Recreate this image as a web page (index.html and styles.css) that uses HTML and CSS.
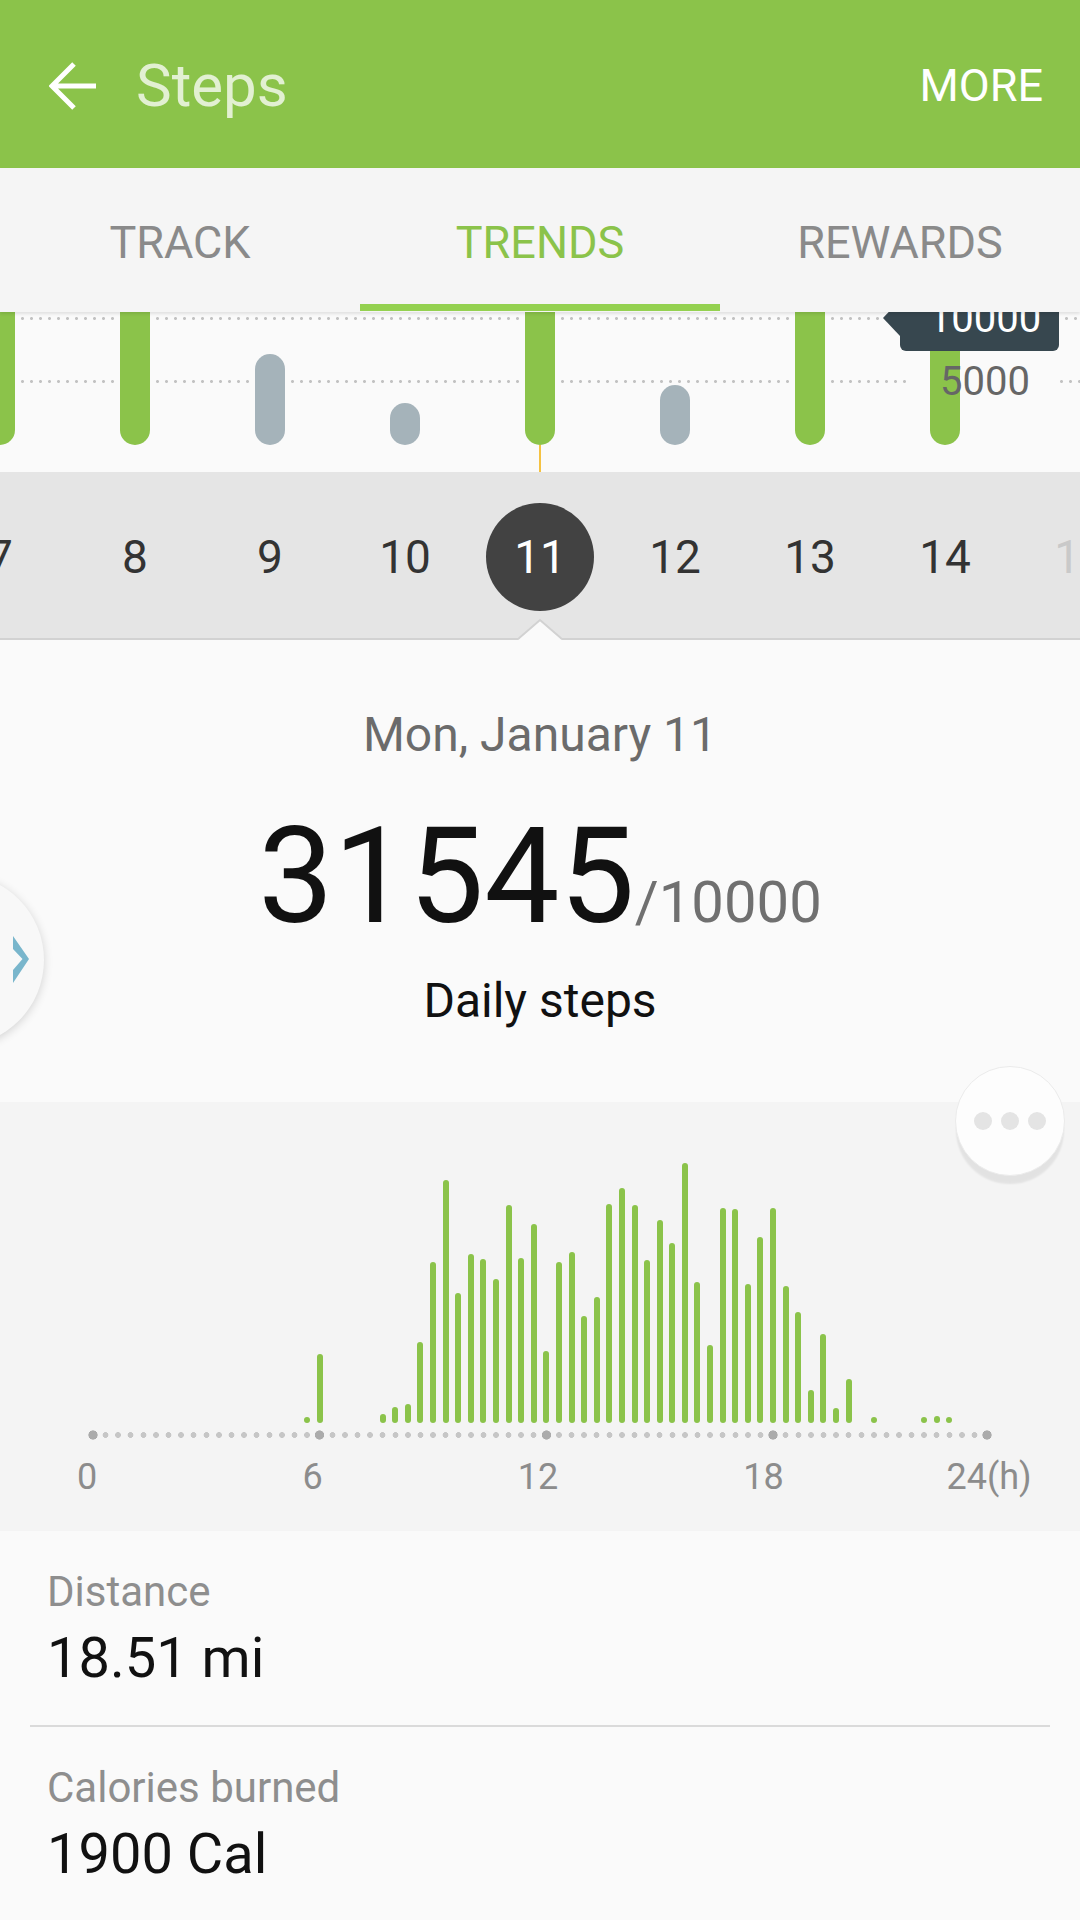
FILE: index.html
```html
<!DOCTYPE html>
<html>
<head>
    <meta charset="utf-8">
    <title>Steps</title>
    <link rel="stylesheet" href="styles.css">
</head>
<body>
    <header class="appbar">
        <svg class="back" width="48" height="48" viewBox="0 0 48 48">
            <path d="M47 24H4M25 2L3 24l22 22" fill="none" stroke="#fff" stroke-width="5"/>
        </svg>
        <h1 class="title">Steps</h1>
        <span class="more">MORE</span>
    </header>

    <nav class="tabs">
        <div class="tab">TRACK</div>
        <div class="tab active">TRENDS</div>
        <div class="tab">REWARDS</div>
    </nav>

    <section class="week">
        <div class="grid-line line-10k"></div>
        <div class="grid-line line-5k"></div>
        <div class="grid-line line-5k-end"></div>
        <div class="week-bars">
            <div class="day-col"><span class="wbar goal"></span><span class="tick"></span></div>
            <div class="day-col"><span class="wbar goal"></span><span class="tick"></span></div>
            <div class="day-col"><span class="wbar" style="height:91px"></span><span class="tick"></span></div>
            <div class="day-col"><span class="wbar" style="height:42px"></span><span class="tick"></span></div>
            <div class="day-col selected"><span class="wbar goal"></span><span class="tick"></span></div>
            <div class="day-col"><span class="wbar" style="height:60px"></span><span class="tick"></span></div>
            <div class="day-col"><span class="wbar goal"></span><span class="tick"></span></div>
            <div class="day-col"><span class="wbar goal"></span><span class="tick"></span></div>
            <div class="day-col"><span class="tick"></span></div>
        </div>
        <div class="goal-tip">10000</div>
        <div class="axis-label">5000</div>
    </section>

    <div class="day-strip">
        <div class="days">
            <div class="day">7</div>
            <div class="day">8</div>
            <div class="day">9</div>
            <div class="day">10</div>
            <div class="day selected"><span class="num">11</span></div>
            <div class="day">12</div>
            <div class="day">13</div>
            <div class="day">14</div>
            <div class="day faded">15</div>
        </div>
        <svg class="notch" width="44" height="22" viewBox="0 0 44 22">
            <polygon points="0,22 22,2 44,22" fill="#fafafa"/>
            <polyline points="0,21 22,2 44,21" fill="none" stroke="#d2d2d2" stroke-width="2"/>
        </svg>
    </div>

    <section class="summary">
        <p class="date">Mon, January 11</p>
        <p class="count"><span class="count-value">31545</span><span class="count-goal">/10000</span></p>
        <p class="count-label">Daily steps</p>
        <button class="side-next">
            <svg width="20" height="52" viewBox="0 0 20 52">
                <polygon points="1,2 17,25 1,49 1,36 10.5,25 1,15" fill="#79b6cc"/>
            </svg>
        </button>
    </section>

    <section class="hourly">
        <button class="more-btn"><i></i><i></i><i></i></button>
        <div class="hour-bars">
            <i></i><i></i><i></i><i></i><i></i><i></i>
            <i></i><i></i><i></i><i></i><i></i><i></i>
            <i></i><i></i><i></i><i></i><i></i>
            <i><b style="height:6px"></b></i>
            <i><b style="height:69px"></b></i>
            <i></i><i></i><i></i><i></i>
            <i><b style="height:9px"></b></i>
            <i><b style="height:16px"></b></i>
            <i><b style="height:19px"></b></i>
            <i><b style="height:81px"></b></i>
            <i><b style="height:161px"></b></i>
            <i><b style="height:243px"></b></i>
            <i><b style="height:130px"></b></i>
            <i><b style="height:169px"></b></i>
            <i><b style="height:164px"></b></i>
            <i><b style="height:144px"></b></i>
            <i><b style="height:218px"></b></i>
            <i><b style="height:165px"></b></i>
            <i><b style="height:199px"></b></i>
            <i><b style="height:72px"></b></i>
            <i><b style="height:161px"></b></i>
            <i><b style="height:171px"></b></i>
            <i><b style="height:107px"></b></i>
            <i><b style="height:126px"></b></i>
            <i><b style="height:219px"></b></i>
            <i><b style="height:235px"></b></i>
            <i><b style="height:218px"></b></i>
            <i><b style="height:163px"></b></i>
            <i><b style="height:203px"></b></i>
            <i><b style="height:180px"></b></i>
            <i><b style="height:260px"></b></i>
            <i><b style="height:141px"></b></i>
            <i><b style="height:78px"></b></i>
            <i><b style="height:215px"></b></i>
            <i><b style="height:214px"></b></i>
            <i><b style="height:139px"></b></i>
            <i><b style="height:186px"></b></i>
            <i><b style="height:215px"></b></i>
            <i><b style="height:137px"></b></i>
            <i><b style="height:111px"></b></i>
            <i><b style="height:33px"></b></i>
            <i><b style="height:89px"></b></i>
            <i><b style="height:15px"></b></i>
            <i><b style="height:44px"></b></i>
            <i></i>
            <i><b style="height:6px"></b></i>
            <i></i><i></i><i></i>
            <i><b style="height:6px"></b></i>
            <i><b style="height:7px"></b></i>
            <i><b style="height:6px"></b></i>
            <i></i><i></i><i></i>
        </div>
        <div class="hour-dots">
            <span class="major"></span><span></span><span></span><span></span><span></span><span></span>
            <span></span><span></span><span></span><span></span><span></span><span></span>
            <span></span><span></span><span></span><span></span><span></span><span></span>
            <span class="major"></span><span></span><span></span><span></span><span></span><span></span>
            <span></span><span></span><span></span><span></span><span></span><span></span>
            <span></span><span></span><span></span><span></span><span></span><span></span>
            <span class="major"></span><span></span><span></span><span></span><span></span><span></span>
            <span></span><span></span><span></span><span></span><span></span><span></span>
            <span></span><span></span><span></span><span></span><span></span><span></span>
            <span class="major"></span><span></span><span></span><span></span><span></span><span></span>
            <span></span><span></span><span></span><span></span><span></span><span></span>
            <span></span><span></span><span></span><span></span><span></span><span class="major"></span>
        </div>
        <div class="hour-labels">
            <span>0</span><span>6</span><span>12</span><span>18</span><span>24(h)</span>
        </div>
    </section>

    <section class="stats">
        <div class="stat">
            <p class="stat-name">Distance</p>
            <p class="stat-value">18.51 mi</p>
        </div>
        <div class="stat">
            <p class="stat-name">Calories burned</p>
            <p class="stat-value">1900 Cal</p>
        </div>
    </section>
</body>
</html>
```

FILE: styles.css
```css
body {
    margin: 0;
    width: 1080px;
    height: 1920px;
    overflow: hidden;
    background-color: #fafafa;
    font-family: Roboto, "Noto Sans", sans-serif;
}

/* top bar */
.appbar {
    height: 168px;
    box-sizing: border-box;
    padding: 4px 37px 0 49px;
    display: flex;
    align-items: center;
    background-color: #8bc34a;
}

.appbar .back {
    flex: none;
    margin-right: 39px;
}

.appbar .title {
    flex: 1;
    margin: 0;
    font-size: 60px;
    font-weight: 400;
    line-height: 68px;
    color: #e2f0d2;
}

.appbar .more {
    font-size: 45px;
    line-height: 52px;
    color: #fff;
}

/* tabs */
.tabs {
    position: relative;
    z-index: 3;
    display: flex;
    height: 144px;
    background-color: #f5f5f5;
    box-shadow: 0 2px 3px rgba(0, 0, 0, 0.1);
}

.tab {
    flex: 1;
    height: 143px;
    box-sizing: border-box;
    padding-top: 49px;
    border-bottom: 7px solid transparent;
    text-align: center;
    font-size: 45px;
    line-height: 52px;
    color: #8a8a8a;
}

.tab.active {
    color: #8bc34a;
    border-bottom-color: #94d150;
}

/* weekly chart */
.week {
    position: relative;
    height: 160px;
    overflow: hidden;
    background-color: #fafafa;
}

.grid-line {
    position: absolute;
    left: 0;
    right: 0;
    height: 3px;
    background-image: radial-gradient(circle, #c2c2c2 1.2px, transparent 1.7px);
    background-size: 9px 3px;
}

.line-10k {
    top: 5px;
}

.line-5k {
    top: 68px;
    right: 168px;
}

.line-5k-end {
    top: 68px;
    left: 1057px;
}

.week-bars {
    position: relative;
    display: flex;
    height: 100%;
    margin-left: -67.5px;
}

.day-col {
    flex: none;
    width: 135px;
    display: flex;
    flex-direction: column;
    align-items: center;
    justify-content: flex-end;
}

.wbar {
    flex: none;
    width: 30px;
    border-radius: 15px;
    background-color: #a5b3ba;
}

.wbar.goal {
    height: 150px;
    border-radius: 0 0 15px 15px;
    background-color: #8bc34a;
}

.tick {
    flex: none;
    width: 2px;
    height: 27px;
}

.day-col.selected .tick {
    background-color: #f5c242;
}

.goal-tip {
    position: absolute;
    left: 900px;
    top: -20px;
    z-index: 2;
    width: 159px;
    height: 59px;
    box-sizing: border-box;
    padding: 3px 0 0 11px;
    border-radius: 6px;
    background-color: #37474f;
    color: #fff;
    text-align: center;
    font-size: 40px;
    line-height: 48px;
}

.goal-tip::before {
    content: "";
    position: absolute;
    left: -17px;
    top: 8px;
    border-top: 18px solid transparent;
    border-bottom: 18px solid transparent;
    border-right: 17px solid #37474f;
}

.axis-label {
    position: absolute;
    left: 940px;
    top: 46px;
    z-index: 1;
    font-size: 40px;
    line-height: 48px;
    color: #666;
}

/* day selector */
.day-strip {
    position: relative;
    height: 166px;
    background-color: #e5e5e5;
    border-bottom: 2px solid #d2d2d2;
}

.days {
    display: flex;
    height: 100%;
    box-sizing: border-box;
    padding-top: 3px;
    margin-left: -67.5px;
    overflow: hidden;
}

.day {
    flex: none;
    width: 135px;
    display: flex;
    align-items: center;
    justify-content: center;
    font-size: 46px;
    color: #333;
}

.day.faded {
    color: #c9c9c9;
}

.day .num {
    width: 108px;
    height: 108px;
    border-radius: 50%;
    display: flex;
    align-items: center;
    justify-content: center;
    background-color: #424242;
    color: #fff;
}

.notch {
    position: absolute;
    left: 518px;
    bottom: -2px;
}

/* daily summary */
.summary {
    position: relative;
    height: 462px;
    box-sizing: border-box;
    padding-top: 67px;
    text-align: center;
    background-color: #fafafa;
}

.date {
    margin: 0;
    font-size: 48px;
    line-height: 56px;
    color: #6b6b6b;
}

.count {
    margin: 47px 0 0;
    font-size: 134px;
    line-height: 134px;
    color: #111;
}

.count-goal {
    font-size: 58px;
    line-height: 1;
    color: #707070;
}

.count-label {
    margin: 29px 0 0;
    font-size: 48px;
    line-height: 56px;
    color: #111;
}

.side-next {
    position: absolute;
    left: -128px;
    top: 234px;
    width: 172px;
    height: 172px;
    padding: 0 12px 0 0;
    border: none;
    border-radius: 50%;
    display: flex;
    align-items: center;
    justify-content: flex-end;
    background-color: #f8f8f8;
    box-shadow: 0 2px 10px rgba(0, 0, 0, 0.16);
}

/* hourly chart */
.hourly {
    position: relative;
    height: 429px;
    box-sizing: border-box;
    padding-top: 41px;
    background-color: #f4f4f4;
}

.more-btn {
    position: absolute;
    left: 955px;
    top: -36px;
    z-index: 1;
    width: 110px;
    height: 110px;
    padding: 0;
    border: 1px solid #ebebeb;
    border-radius: 50%;
    display: flex;
    align-items: center;
    justify-content: center;
    gap: 9px;
    background-color: #fdfdfd;
    box-shadow: 0 9px 2px -1px rgba(0, 0, 0, 0.07);
}

.more-btn i {
    width: 18px;
    height: 18px;
    border-radius: 50%;
    background-color: #e4e4e4;
}

.hour-bars {
    display: flex;
    align-items: flex-end;
    height: 280px;
    padding-left: 86.7px;
}

.hour-bars i {
    flex: none;
    width: 12.6px;
    display: flex;
    justify-content: center;
}

.hour-bars b {
    display: block;
    width: 6px;
    border-radius: 3px;
    background-color: #8bc34a;
}

.hour-dots {
    display: flex;
    height: 10px;
    margin-top: 7px;
    padding-left: 86.7px;
}

.hour-dots span {
    flex: none;
    width: 12.6px;
    height: 10px;
    background: radial-gradient(circle, #c6c6c6 2.6px, transparent 3.2px);
}

.hour-dots span.major {
    background: radial-gradient(circle, #ababab 4.3px, transparent 4.9px);
}

.hour-labels {
    display: flex;
    gap: 105.5px;
    margin-top: 15px;
    padding-left: 27px;
}

.hour-labels span {
    flex: none;
    width: 120px;
    text-align: center;
    font-size: 36px;
    line-height: 44px;
    color: #8c8c8c;
}

/* stats list */
.stat {
    margin: 0 30px;
    padding: 37px 0 35px 17px;
    border-bottom: 2px solid #dadada;
}

.stat-name {
    margin: 0;
    font-size: 42px;
    line-height: 48px;
    color: #8e8e8e;
}

.stat-value {
    margin: 10px 0 0;
    font-size: 56px;
    line-height: 64px;
    color: #111;
}
```
